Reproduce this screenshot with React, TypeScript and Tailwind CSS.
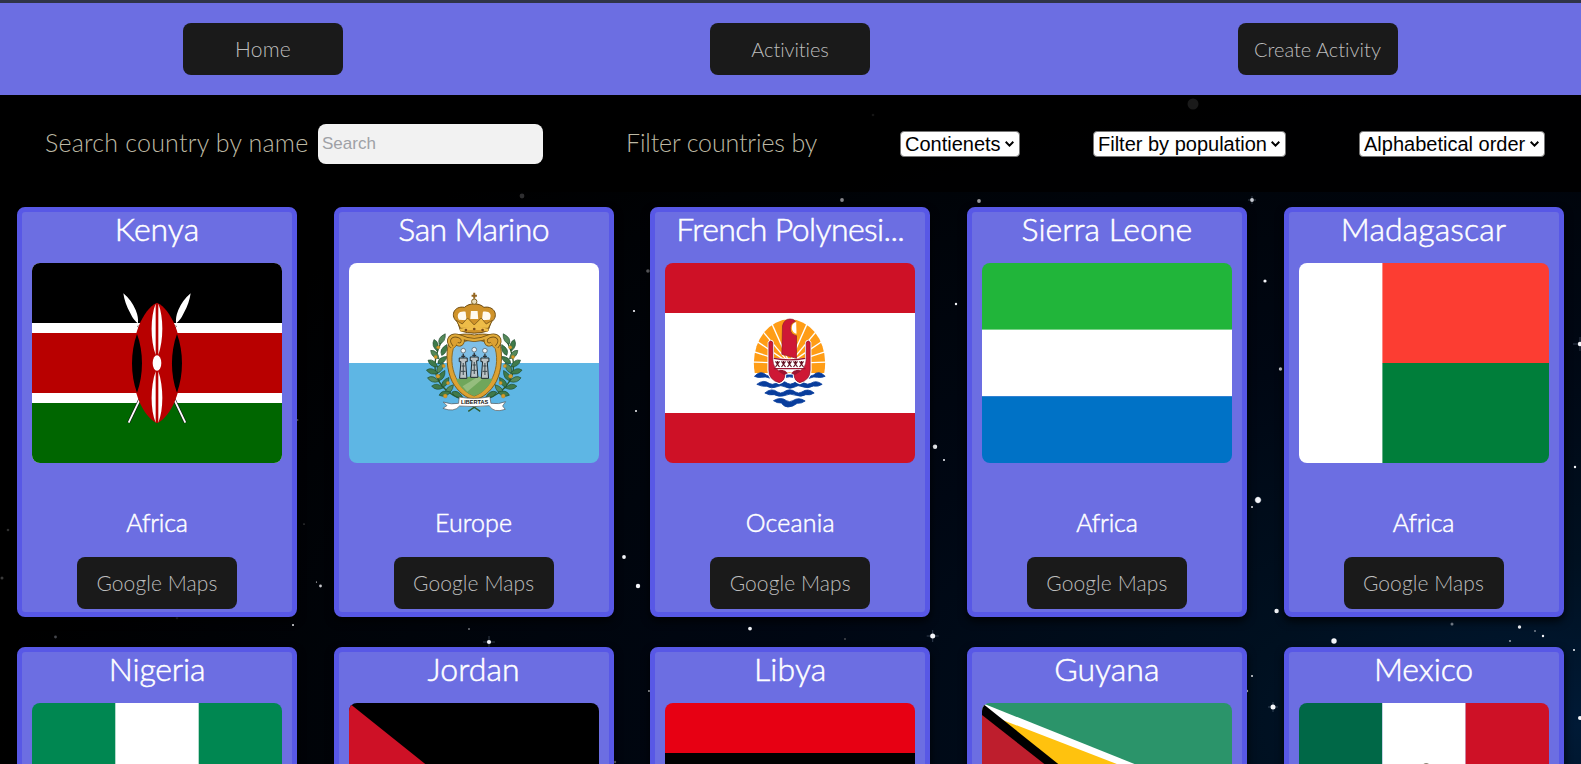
import type { ReactNode } from "react";

type Star = [x: number, y: number, r: number, color?: string];

const stars: Star[] = [
  [1193, 104, 5.5, "#1a1a1a"], [522, 196, 2.4, "#2e2e30"], [842, 200, 1.9, "#85858a"], [979, 201, 1.9, "#9a9a9e"],
  [1252, 200, 1.9, "#c5c9d0"], [648, 271, 1.8, "#6f6f74"], [873, 115, 1.3, "#151515"], [1265, 281, 1.6], [1280.5, 369, 1.7, "#d0d4dc"],
  [1580, 344, 2.2], [956, 304, 1.2], [634, 311, 1.1], [636, 411, 1], [935, 446.7, 2.2], [944, 460, 1], [1258, 500, 2.9],
  [1252, 507, 1], [1575, 467, 1.2], [1276.6, 611, 2.2], [1334, 641, 2.7], [932.7, 636, 2.5], [1252, 676, 1],
  [1247, 691, 1.2], [1273, 707, 2.5], [1519.5, 627, 1.7], [1543, 636, 1.2], [1452, 624, 1.5, "#8791a0"],
  [1510, 641, 1.1, "#8f99a8"], [1535, 631, 0.7], [1574, 650, 1], [1580, 718, 2], [624, 557, 1.9], [638, 586, 2.2],
  [320.5, 586, 1.4, "#c8c8cc"], [316.5, 582, 0.6], [293, 625, 1], [469, 629, 0.7], [489, 642, 2.1],
  [55.5, 637, 1.4, "#45474d"], [177, 618, 1.3, "#303238"], [8, 530, 1.3, "#303030"], [2, 578, 1.5, "#3a3a3a"],
  [750, 628.6, 1.9], [845, 639, 0.8, "#777"], [649, 691, 0.9], [297.5, 420, 0.9, "#777"], [304, 524, 0.6, "#888"],
  [615, 762, 1.2, "#777"],
];

const sparkles = [[489, 642, 6], [932.7, 636, 6], [1273, 707, 5], [1252, 200, 4], [1580, 344, 7], [1258, 500, 4]];

function Sky() {
  return (
    <svg className="absolute inset-0 -z-10 h-full w-full" viewBox="0 0 1581 764" preserveAspectRatio="none" aria-hidden="true">
      <defs>
        <radialGradient id="glow" cx="1" cy="0.95" r="1">
          <stop offset="0" stopColor="#001a36" />
          <stop offset="0.22" stopColor="#001020" />
          <stop offset="0.5" stopColor="#000713" />
          <stop offset="0.75" stopColor="#00040a" />
          <stop offset="1" stopColor="#000" />
        </radialGradient>
      </defs>
      <rect width="1581" height="764" fill="#000" />
      <rect width="1581" height="764" fill="url(#glow)" />
      <rect y="95" width="1581" height="97" fill="#000" fillOpacity="0.85" />
      {sparkles.map(([x, y, r], i) => (
        <path key={i} d={`M${x - r} ${y}H${x + r}M${x} ${y - r}V${y + r}`} stroke="#9fb0c8" strokeOpacity="0.4" strokeWidth="0.8" />
      ))}
      {stars.map(([x, y, r, c], i) => (
        <circle key={i} cx={x} cy={y} r={r} fill={c ?? "#f4f6fa"} />
      ))}
    </svg>
  );
}

const Kenya = () => (
  <>
    <rect width="250" height="200" fill="#fff" />
    <rect width="250" height="60" fill="#000" />
    <rect y="70" width="250" height="60" fill="#b80000" />
    <rect y="140" width="250" height="60" fill="#060" />
    <g transform="translate(-32 -63) scale(.33333)">
      <g id="spear">
        <path d="M386 668L526 376" stroke="#111" strokeWidth="9" />
        <path d="M386 668L526 376" stroke="#fff" strokeWidth="5.5" />
        <path d="M572 280Q568 310 551 340Q541 362 528 370Q526 352 535 330Q548 300 572 280Z" fill="#fff" />
      </g>
      <use href="#spear" transform="translate(942) scale(-1 1)" />
      <path d="M471 308C516 330 546 410 546 490S516 648 471 670C426 648 396 570 396 490S426 330 471 308Z" fill="#b80000" />
      <path d="M411 402C391 455 391 525 411 578C431 525 431 455 411 402ZM531 402C511 455 511 525 531 578C551 525 551 455 531 402Z" fill="#000" />
      <path d="M467 311C451 350 451 420 467 465ZM475 311C491 350 491 420 475 465ZM467 514C451 560 451 630 467 668ZM475 514C491 560 491 630 475 668Z" fill="#fff" />
      <ellipse cx="471" cy="489" rx="13" ry="23" fill="#fff" />
    </g>
  </>
);

const leaves = [
  [96, 177, -60], [76, 196, 75], [102, 210, -65], [74, 224, 45], [97, 240, -38], [68, 251, 35], [90, 264, -60],
  [66, 275, 15], [95, 287, -60], [69, 299, 18], [106, 307, -55], [82, 321, 8], [118, 328, -50], [104, 341, -15], [141, 344, 25],
];

const SanMarino = () => (
  <>
    <rect width="250" height="100" fill="#fff" />
    <rect y="100" width="250" height="100" fill="#5eb6e4" />
    <g transform="translate(61.25 17) scale(.33333)">
      <g id="branch">
        <path d="M98 175Q66 238 77 282Q92 335 160 360L210 394" fill="none" stroke="#2d5a2a" strokeWidth="4" />
        {leaves.map(([x, y, a], i) => (
          <path key={i} d="M-18 0Q-5 -16 18 0Q-2 14 -18 0Z" transform={`translate(${x} ${y}) rotate(${a})`} fill={i % 3 ? "#3f7a4a" : "#55895a"} stroke="#1c4a2a" strokeWidth="1.8" />
        ))}
        <g fill="#d69b28" stroke="#a87820" strokeWidth="1">
          <circle cx="84" cy="202" r="5" /><circle cx="76" cy="231" r="5" /><circle cx="100" cy="258" r="5" />
          <circle cx="83" cy="289" r="6" /><circle cx="113" cy="309" r="5" /><circle cx="105" cy="348" r="6" />
        </g>
      </g>
      <use href="#branch" transform="translate(384) scale(-1 1)" />
      <path d="M192 165C159 158 125 164 116 186C106 219 109 272 126 305C144 337 168 355 192 359C216 355 240 337 258 305C275 272 278 219 268 186C259 164 225 158 192 165Z" fill="#dca132" stroke="#7a5a1c" strokeWidth="3" />
      <path d="M192 178C164 182 139 192 129 206C120 240 126 275 143 304C157 329 176 343 192 348C208 343 227 329 241 304C258 275 264 240 255 206C245 192 220 182 192 178Z" fill="#7fbfe6" stroke="#8d6a24" strokeWidth="3" />
      <path d="M137 297Q165 296 192 286Q222 296 247 297C234 325 213 341 192 348C171 341 149 324 137 297Z" fill="#6fa65b" />
      <path d="M157 319L202 291L220 294L171 335Z" fill="#95bd7e" />
      {[159, 192, 224].map((x, i) => (
        <g key={x} transform={`translate(${x} ${i === 1 ? -3 : 0})`}>
          <path d="M-11 295L-7 245H-12V234H12V245H7L11 295Z" fill="#bac2c5" stroke="#1e292e" strokeWidth="3" />
          <path d="M-5 258H5M0 249V285M-7 274H7" stroke="#37454a" strokeWidth="3" />
          <path d="M0 233V221M-6 229H6" stroke="#2d3438" strokeWidth="4" />
          <circle cy="212" r="7" fill="#eef3f5" stroke="#5a6a72" strokeWidth="2.5" />
        </g>
      ))}
      <path d="M125 201C105 178 123 160 148 169C167 178 154 202 140 191M259 201C279 178 261 160 236 169C217 178 230 202 244 191M150 170Q192 190 234 170" fill="none" stroke="#745316" strokeWidth="12" />
      <path d="M125 201C105 178 123 160 148 169C167 178 154 202 140 191M259 201C279 178 261 160 236 169C217 178 230 202 244 191M150 170Q192 190 234 170" fill="none" stroke="#e0aa38" strokeWidth="7" />
      <path d="M151 153L142 126C118 110 130 76 163 82C177 68 207 68 221 82C254 76 267 110 243 126L233 153Q192 166 151 153Z" fill="#d0932a" stroke="#6d4b12" strokeWidth="3" />
      <path d="M146 119C137 102 147 92 166 95L169 121ZM180 117L182 93H202L204 117ZM215 121L218 95C237 92 247 102 238 119Z" fill="#fffaf0" />
      <path d="M138 121L156 132L172 114L192 135L213 114L228 132L246 121L234 145L151 145Z" fill="#eebc48" stroke="#7a5516" strokeWidth="2.5" />
      <path d="M150 151Q192 138 234 151" fill="none" stroke="#efbd4b" strokeWidth="9" />
      <g fill="#7c4b1a"><circle cx="167" cy="150" r="4" /><circle cx="192" cy="147" r="4" /><circle cx="217" cy="150" r="4" /></g>
      <path d="M192 56V38M184 47H200" stroke="#94651f" strokeWidth="6" />
      <circle cx="192" cy="65" r="8" fill="#e8ddbb" stroke="#80601f" strokeWidth="3" />
      <path d="M147 351Q192 360 239 350L242 370Q266 374 286 365L277 378L285 388Q250 400 237 377Q192 382 148 378Q132 398 98 385L110 377L99 366Q124 375 145 370Z" fill="#fff" stroke="#555" strokeWidth="2" />
      <text x="193" y="372" textAnchor="middle" textLength="82" lengthAdjust="spacingAndGlyphs" fontFamily="Liberation Sans" fontSize="18" fontWeight="700" fill="#111">LIBERTAS</text>
    </g>
  </>
);

const rayAngles = [-88, -72, -56, -40, -24, 24, 40, 56, 72, 88];

const FrenchPolynesia = () => (
  <>
    <rect width="250" height="200" fill="#ce1126" />
    <rect y="50" width="250" height="100" fill="#fff" />
    <g transform="translate(74.5 42) scale(.33333)">
      <clipPath id="upper-disc"><path d="M0 0H300V204H0Z" /></clipPath>
      <g clipPath="url(#upper-disc)">
        <ellipse cx="150" cy="174" rx="107" ry="131" fill="#ff9d16" />
        {rayAngles.map((a) => (
          <path key={a} d="M150 175V20" transform={`rotate(${a} 150 175)`} stroke="#fff" strokeWidth="4" />
        ))}
      </g>
      <g fill="#083d9c" stroke="#083d9c" strokeWidth="2.5">
        <path d="M45 214Q63 194 80 210Q88 216 98 210L204 210Q212 216 222 210Q238 194 257 214Q246 219 234 217Q222 214 212 219Q188 229 168 219Q150 212 132 219Q112 229 90 219Q78 214 67 217Q55 219 45 214Z" />
        <path d="M52 238Q72 222 89 235Q98 241 109 235Q127 222 144 235Q152 240 161 235Q179 222 196 235Q204 240 214 235Q231 224 248 238Q236 246 222 243Q206 252 188 245Q176 238 163 247Q151 253 138 246Q124 238 110 246Q96 252 82 244Q66 245 52 238Z" />
        <path d="M76 264Q96 247 114 261Q123 267 133 261Q151 248 168 261Q177 267 187 261Q206 248 224 264Q212 272 199 269Q184 277 170 271Q151 263 134 272Q119 277 104 269Q90 272 76 264Z" />
        <path d="M102 287Q124 274 141 287Q150 293 160 287Q178 275 197 288Q186 296 173 295Q160 306 145 306Q132 305 126 294Q113 295 102 287Z" />
      </g>
      <path d="M101 160H199V192Q174 208 150 202Q124 210 101 192Z" fill="#fff" />
      <path d="M87 112Q94 101 101 112V165Q103 191 119 196Q132 188 138 207Q139 230 119 235Q86 225 86 196ZM213 112Q206 101 199 112V165Q197 191 181 196Q168 188 162 207Q161 230 181 235Q214 225 214 196Z" fill="#ce1835" stroke="#fff" strokeWidth="5" />
      <path d="M88 112Q94 103 100 112V165Q102 190 118 197Q131 192 136 207Q137 227 119 233Q88 225 88 196ZM212 112Q206 103 200 112V165Q198 190 182 197Q169 192 164 207Q163 227 181 233Q212 225 212 196Z" fill="#ce1835" stroke="#8d1830" strokeWidth="2" />
      <path d="M127 148L129 62Q135 42 151 42Q161 41 168 49Q149 55 153 78Q157 91 171 92V160Z" fill="#ce1835" stroke="#8d1830" strokeWidth="2" />
      <path d="M170 51Q155 55 157 72Q160 84 171 86Z" fill="#fff" />
      <path d="M103 160Q150 169 197 160M103 191H198" fill="none" stroke="#9b1430" strokeWidth="4" />
      {[114, 132, 150, 168, 186].map((x) => (
        <path key={x} d={`M${x - 6} 169L${x + 6} 186M${x + 6} 169L${x - 6} 186M${x} 168V179`} stroke="#621020" strokeWidth="3.5" />
      ))}
      <path d="M116 199Q132 188 145 205L134 210ZM184 199Q168 188 155 205L166 210Z" fill="#9b1430" />
    </g>
  </>
);

const SierraLeone = () => (
  <>
    <rect width="250" height="67" fill="#21b53a" />
    <rect y="66.6" width="250" height="66.8" fill="#fff" />
    <rect y="133.3" width="250" height="66.7" fill="#0072c6" />
  </>
);

const Madagascar = () => (
  <>
    <rect width="84" height="200" fill="#fff" />
    <rect x="83.4" width="166.6" height="100.2" fill="#fc3d32" />
    <rect x="83.4" y="100" width="166.6" height="100" fill="#007e3a" />
  </>
);

const Nigeria = () => (
  <>
    <rect width="250" height="200" fill="#008751" />
    <rect x="83.3" width="83.4" height="200" fill="#fff" />
  </>
);

const Jordan = () => (
  <>
    <rect y="66" width="250" height="68" fill="#fff" />
    <rect width="250" height="66.7" fill="#000" />
    <rect y="133.3" width="250" height="66.7" fill="#007a3d" />
    <path d="M0 0L125 100L0 200Z" fill="#ce1126" />
  </>
);

const Libya = () => (
  <>
    <rect width="250" height="50" fill="#e70013" />
    <rect y="50" width="250" height="100" fill="#000" />
    <rect y="150" width="250" height="50" fill="#239e46" />
  </>
);

const Guyana = () => (
  <>
    <rect width="250" height="200" fill="#2b946a" />
    <path d="M0 0L250 100L0 200Z" fill="#fff" />
    <path d="M0 9L236 100L0 191Z" fill="#ffc20e" />
    <path d="M0 0L125 100L0 200Z" fill="#000" />
    <path d="M0 12L112 100L0 188Z" fill="#be1e2d" />
  </>
);

const Mexico = () => (
  <>
    <rect width="83.4" height="200" fill="#006847" />
    <rect x="83.3" width="83.4" height="200" fill="#fff" />
    <rect x="166.6" width="83.4" height="200" fill="#ce1126" />
    <path d="M124.5 61Q127 59 130 61L133 66H121Z" fill="#8a8172" />
  </>
);

type Country = { name: string; flag: ReactNode; tracking: string; region?: string; regionTracking?: string };

const countries: Country[] = [
  { name: "Kenya", region: "Africa", flag: <Kenya />, tracking: "tracking-[0px]", regionTracking: "tracking-[-0.2px]" },
  { name: "San Marino", region: "Europe", flag: <SanMarino />, tracking: "tracking-[-0.6px]", regionTracking: "tracking-[0.1px]" },
  { name: "French Polynesi...", region: "Oceania", flag: <FrenchPolynesia />, tracking: "tracking-[-0.6px]", regionTracking: "tracking-[0.2px]" },
  { name: "Sierra Leone", region: "Africa", flag: <SierraLeone />, tracking: "tracking-[0px]", regionTracking: "tracking-[-0.2px]" },
  { name: "Madagascar", region: "Africa", flag: <Madagascar />, tracking: "tracking-[0.1px]", regionTracking: "tracking-[-0.2px]" },
  { name: "Nigeria", flag: <Nigeria />, tracking: "tracking-[-0.2px]" },
  { name: "Jordan", flag: <Jordan />, tracking: "tracking-[0.1px]" },
  { name: "Libya", flag: <Libya />, tracking: "tracking-[0.1px]" },
  { name: "Guyana", flag: <Guyana />, tracking: "tracking-[0px]" },
  { name: "Mexico", flag: <Mexico />, tracking: "tracking-[-0.1px]" },
];

function DarkButton({ children, className = "" }: { children: string; className?: string }) {
  return (
    <button className={`h-[52px] w-40 shrink-0 rounded-lg bg-[#1a1a1a] leading-[52px] font-light whitespace-nowrap text-[#bdbdbd] ${className}`}>
      {children}
    </button>
  );
}

function Card({ country }: { country: Country }) {
  return (
    <article className="flex h-[410px] w-[280px] flex-col items-center rounded-lg border-[5px] border-[#5858e6] bg-[#6c6ee2] text-white shadow-[0_4px_8px_rgba(0,0,0,0.8)]">
      <h2 className={`h-[51px] text-[32px] leading-[34px] font-light whitespace-nowrap [-webkit-text-stroke:0.5px_white] ${country.tracking}`}>{country.name}</h2>
      <svg className="h-[200px] w-[250px] shrink-0 rounded-lg" viewBox="0 0 250 200" aria-hidden="true">{country.flag}</svg>
      {country.region && (
        <>
          <h3 className={`mt-[43px] mb-[19px] h-8 text-[25px] leading-8 font-light [-webkit-text-stroke:0.5px_white] ${country.regionTracking}`}>{country.region}</h3>
          <DarkButton className="text-[21px] tracking-[0.1px]">Google Maps</DarkButton>
        </>
      )}
    </article>
  );
}

function Select({ label, width }: { label: string; width: string }) {
  return (
    <button className={`flex h-[26px] items-center justify-between rounded-[4px] border border-[#767676] bg-white pr-[5px] pl-[4px] font-['Liberation_Sans',Arial,sans-serif] text-[20px] leading-6 whitespace-nowrap text-black ${width}`}>
      <span>{label}</span>
      <svg className="h-[6px] w-[9px]" viewBox="0 0 9 6" fill="none" stroke="#000" strokeWidth="2"><path d="M0.7 0.8L4.5 4.6L8.3 0.8" /></svg>
    </button>
  );
}

export default function App() {
  return (
    <div className="relative isolate h-[764px] w-full overflow-hidden bg-black font-['Lato',sans-serif] [font-variant-ligatures:none]">
      <Sky />
      <nav className="grid h-[95px] grid-cols-3 items-center justify-items-center border-t-[3px] border-[#2f3447] bg-[#6c6ee2]">
        <DarkButton className="mr-px text-[21px] tracking-[0.2px]">Home</DarkButton>
        <DarkButton className="mr-px text-[20px] tracking-[-0.1px]">Activities</DarkButton>
        <DarkButton className="text-[20px]">Create Activity</DarkButton>
      </nav>
      <section className="flex h-[97px] items-center pl-[45px] text-[25px] font-light text-[#bdb9a4]">
        <label className="flex h-10 w-[498px] items-center justify-between">
          <span className="-mt-0.5 tracking-[0.2px] whitespace-nowrap">Search country by name</span>
          <input placeholder="Search" className="h-10 w-[225px] rounded-lg bg-[#f2f2f2] px-1 font-['Liberation_Sans',Arial,sans-serif] text-[17px] font-normal tracking-normal text-black placeholder:text-[#9fa1a6]" />
        </label>
        <span className="-mt-0.5 ml-[83px] w-[274px] tracking-[-0.15px] whitespace-nowrap">Filter countries by</span>
        <div className="flex w-[645px] justify-between font-normal">
          <Select label="Contienets" width="w-[120px]" />
          <Select label="Filter by population" width="w-[193px]" />
          <Select label="Alphabetical order" width="w-[186px]" />
        </div>
      </section>
      <main className="grid grid-cols-[repeat(5,280px)] justify-between gap-y-[30px] pt-[15px] pr-[17.5px] pl-[17px]">
        {countries.map((c) => <Card key={c.name} country={c} />)}
      </main>
    </div>
  );
}
